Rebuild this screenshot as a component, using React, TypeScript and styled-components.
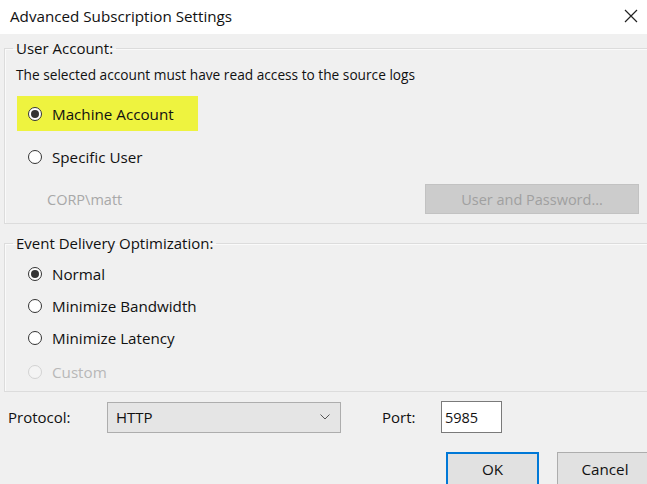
import React from 'react';
import styled, { createGlobalStyle } from 'styled-components';

const GlobalStyle = createGlobalStyle`
  html, body {
    margin: 0;
    padding: 0;
    background: #f0f0f0;
  }
  body {
    font-family: "Open Sans", "Noto Sans", sans-serif;
    font-size: 15px;
    color: #111;
  }
`;

const Dialog = styled.div`
  width: 647px;
  height: 484px;
  overflow: hidden;
  background: #f0f0f0;
  display: flex;
  flex-direction: column;
`;

const TitleBar = styled.div`
  height: 34px;
  flex: none;
  background: #fff;
  display: flex;
  align-items: center;
  justify-content: space-between;
  padding: 0 9px 3px 10px;
  box-sizing: border-box;
  font-size: 15.2px;
`;

const CloseIcon = () => (
  <svg width="14" height="14" viewBox="0 0 14 14">
    <path d="M1 1 L13 13 M13 1 L1 13" stroke="#222" strokeWidth="1.2" />
  </svg>
);

const Body = styled.div`
  padding: 4px 0 0 4px;
  display: flex;
  flex-direction: column;
`;

const Group = styled.fieldset<{ $gap?: number }>`
  margin: ${(p) => p.$gap ?? 0}px -20px 0 0;
  padding: 0 20px 0 23px;
  border: 1px solid #dcdcdc;
  box-shadow: inset 1px 1px 0 #fafafa;
  display: flex;
  flex-direction: column;
  min-width: 0;
`;

const Legend = styled.legend`
  padding: 0 3px;
  margin-left: -15px;
  line-height: 20px;
  font-size: 15px;
`;

const Row = styled.div<{ $h: number; $mt?: number }>`
  height: ${(p) => p.$h}px;
  margin-top: ${(p) => p.$mt ?? 0}px;
  display: flex;
  align-items: center;
  flex: none;
`;

const Description = styled(Row)`
  margin-left: -12px;
  font-size: 13.7px;
`;

const Highlight = styled.div`
  height: 100%;
  display: flex;
  align-items: center;
  background: #eef33f;
  margin-left: -11px;
  padding: 0 24px 0 11px;
`;

const RadioLabel = styled.label<{ $disabled?: boolean }>`
  display: flex;
  align-items: center;
  gap: 10px;
  font-size: 15.2px;
  color: ${(p) => (p.$disabled ? '#b8b8b8' : '#111')};
`;

const RadioCircle = styled.span<{ $checked?: boolean; $disabled?: boolean }>`
  width: 14px;
  height: 14px;
  box-sizing: border-box;
  border-radius: 50%;
  border: 1px solid ${(p) => (p.$disabled ? '#d2d2d2' : '#333')};
  background: ${(p) => (p.$disabled ? '#f4f4f4' : '#fff')};
  display: flex;
  align-items: center;
  justify-content: center;
  flex: none;

  &::after {
    content: '';
    width: 8px;
    height: 8px;
    border-radius: 50%;
    background: #333;
    display: ${(p) => (p.$checked ? 'block' : 'none')};
  }
`;

const Radio: React.FC<{ label: string; checked?: boolean; disabled?: boolean }> = ({
  label,
  checked,
  disabled,
}) => (
  <RadioLabel $disabled={disabled}>
    <RadioCircle $checked={checked} $disabled={disabled} />
    {label}
  </RadioLabel>
);

const UserRow = styled(Row)`
  justify-content: space-between;
  padding-right: 7px;
`;

const MutedText = styled.span`
  color: #a8a8a8;
  margin-left: 19px;
  font-size: 14.5px;
`;

const DisabledButton = styled.div`
  width: 214px;
  height: 30px;
  box-sizing: border-box;
  background: #cccccc;
  border: 1px solid #c2c2c2;
  color: #a0a0a0;
  display: flex;
  align-items: center;
  justify-content: center;
  font-size: 14.5px;
`;

const FormRow = styled.div`
  display: flex;
  align-items: center;
  margin-top: 9px;
  padding-left: 4px;
  height: 32px;
`;

const FieldLabel = styled.span<{ $w: number }>`
  width: ${(p) => p.$w}px;
  flex: none;
`;

const Select = styled.div`
  width: 234px;
  height: 31px;
  box-sizing: border-box;
  background: #e5e5e5;
  border: 1px solid #adadad;
  display: flex;
  align-items: center;
  justify-content: space-between;
  padding: 0 10px 0 8px;
  margin-right: 41px;
`;

const Chevron = () => (
  <svg width="10" height="6" viewBox="0 0 10 6">
    <path d="M0.5 0.5 L5 5 L9.5 0.5" stroke="#555" strokeWidth="1" fill="none" />
  </svg>
);

const PortInput = styled.div`
  width: 61px;
  height: 32px;
  box-sizing: border-box;
  background: #fff;
  border: 1px solid #7a7a7a;
  display: flex;
  align-items: center;
  padding-left: 3px;
  font-size: 14.5px;
`;

const ButtonRow = styled.div`
  display: flex;
  gap: 18px;
  margin-top: 19px;
  padding-left: 442px;
`;

const Button = styled.div<{ $default?: boolean }>`
  width: ${(p) => (p.$default ? 93 : 96)}px;
  height: 34px;
  flex: none;
  box-sizing: border-box;
  background: #e1e1e1;
  border: ${(p) => (p.$default ? '2px solid #0078d7' : '1px solid #adadad')};
  display: flex;
  align-items: center;
  justify-content: center;
  font-size: 15.2px;
`;

export default function App() {
  return (
    <>
      <GlobalStyle />
      <Dialog>
        <TitleBar>
          <span>Advanced Subscription Settings</span>
          <CloseIcon />
        </TitleBar>
        <Body>
          <Group>
            <Legend>User Account:</Legend>
            <Description $h={32}>The selected account must have read access to the source logs</Description>
            <Row $h={35} $mt={6}>
              <Highlight>
                <Radio label="Machine Account" checked />
              </Highlight>
            </Row>
            <Row $h={34} $mt={9}>
              <Radio label="Specific User" />
            </Row>
            <UserRow $h={30} $mt={10}>
              <MutedText>CORP\matt</MutedText>
              <DisabledButton>User and Password...</DisabledButton>
            </UserRow>
            <Row $h={9} />
          </Group>
          <Group $gap={9}>
            <Legend>Event Delivery Optimization:</Legend>
            <Row $h={32} $mt={5}>
              <Radio label="Normal" checked />
            </Row>
            <Row $h={32}>
              <Radio label="Minimize Bandwidth" />
            </Row>
            <Row $h={32}>
              <Radio label="Minimize Latency" />
            </Row>
            <Row $h={32} $mt={2}>
              <Radio label="Custom" disabled />
            </Row>
            <Row $h={3} />
          </Group>
          <FormRow>
            <FieldLabel $w={99}>Protocol:</FieldLabel>
            <Select>
              <span>HTTP</span>
              <Chevron />
            </Select>
            <FieldLabel $w={59}>Port:</FieldLabel>
            <PortInput>5985</PortInput>
          </FormRow>
          <ButtonRow>
            <Button $default>OK</Button>
            <Button>Cancel</Button>
          </ButtonRow>
        </Body>
      </Dialog>
    </>
  );
}
